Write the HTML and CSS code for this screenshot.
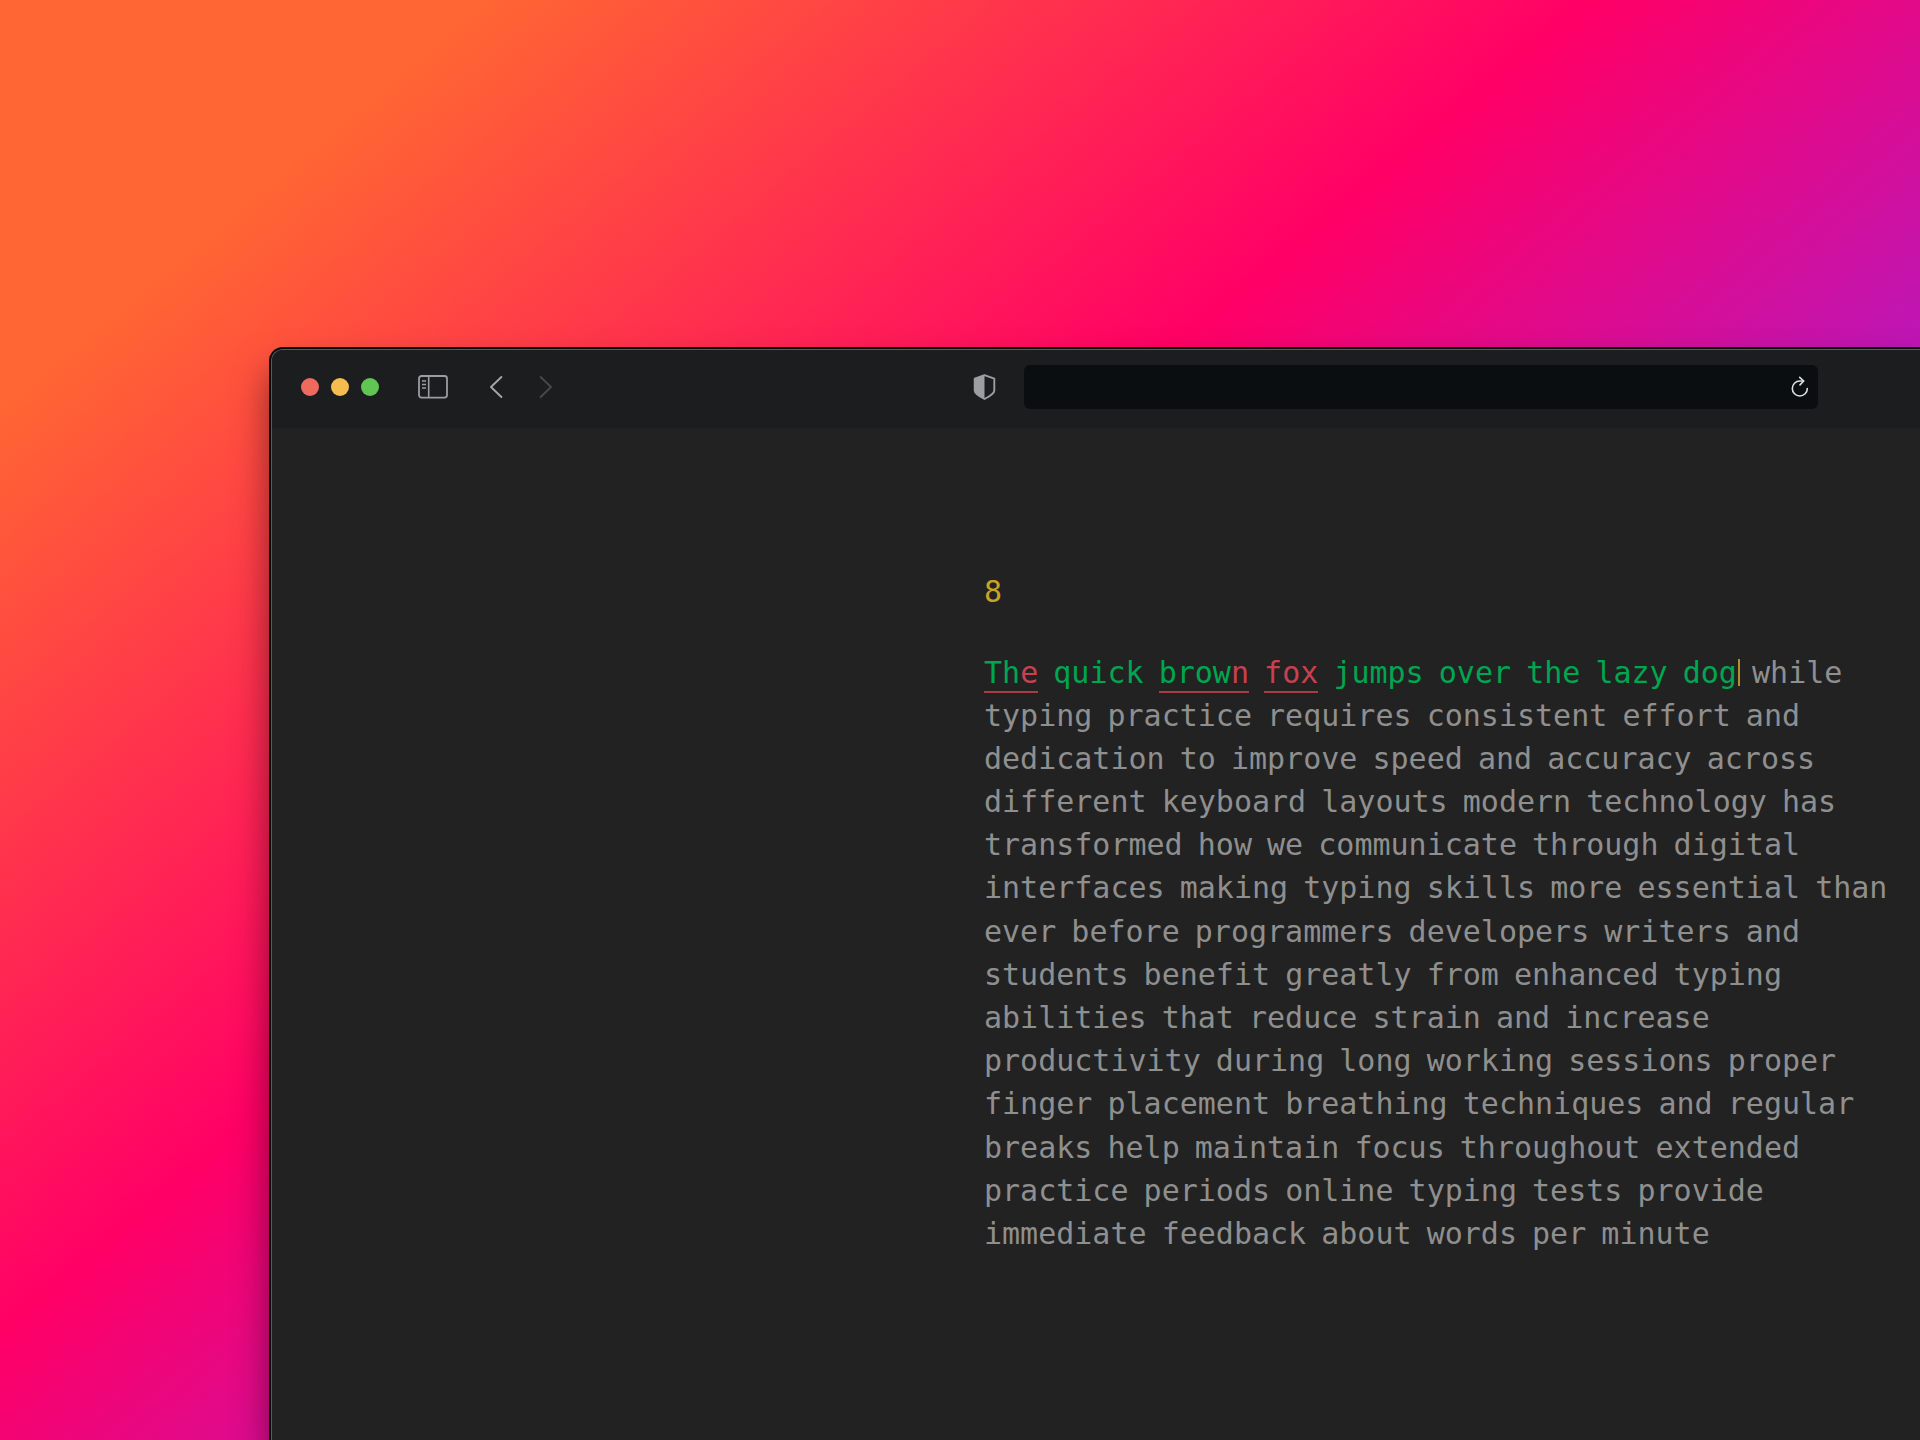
FILE: index.html
```html
<!DOCTYPE html>
<html lang="en">
<head>
<meta charset="utf-8">
<title>Typing practice</title>
<link rel="stylesheet" href="styles.css">
</head>
<body>
<main class="window">
  <header class="toolbar">
    <div class="lights"><i class="light red"></i><i class="light yellow"></i><i class="light green"></i></div>
    <svg class="sidebar-icon" width="30" height="24" viewBox="0 0 30 24" fill="none" stroke="#9b9da0">
      <rect x="1" y="1" width="28" height="21.6" rx="2.5" stroke-width="1.8"/>
      <path d="M10.7 1v21.6" stroke-width="1.6"/>
      <path d="M4 6h4M4 9.5h4M4 13h4" stroke-width="1.3"/>
    </svg>
    <svg class="back-icon" width="14" height="24" viewBox="0 0 14 24" fill="none" stroke="#a3a5a7" stroke-width="1.9" stroke-linecap="round" stroke-linejoin="round"><path d="M12.4 2L2 12l10.4 10"/></svg>
    <svg class="forward-icon" width="14" height="24" viewBox="0 0 14 24" fill="none" stroke="#46484a" stroke-width="1.9" stroke-linecap="round" stroke-linejoin="round"><path d="M1.6 2L12 12 1.6 22"/></svg>
    <svg class="shield-icon" width="23" height="26" viewBox="0 0 23 26">
      <path d="M11.500 1.200L21.300 4.700V16.500Q21.300 20 11.500 25Q1.700 20 1.700 16.500V4.700Z" fill="none" stroke="#9c9ea1" stroke-width="1.9" stroke-linejoin="round"/>
      <path d="M11.500 1.200V25Q1.700 20 1.700 16.500V4.700Z" fill="#9c9ea1"/>
    </svg>
    <div class="address">
      <svg class="reload-icon" width="18" height="22" viewBox="0 0 18 22" fill="none" stroke="#dcdedf" stroke-width="1.6" stroke-linecap="round" stroke-linejoin="round">
        <path d="M16.300 12.500A7.500 7.500 0 1 1 8.800 5H12.500"/>
        <path d="M8.700 1.300L12.700 5L9 8.900"/>
      </svg>
    </div>
  </header>
  <section class="page">
    <div class="count">8</div>
    <div class="words">
      <div class="line"><span class="word ok wrong">Th<b class="miss">e</b></span><span class="word ok">quick</span><span class="word ok wrong">brow<b class="miss">n</b></span><span class="word wrong"><b class="miss">fox</b></span><span class="word ok">jumps</span><span class="word ok">over</span><span class="word ok">the</span><span class="word ok">lazy</span><span class="word ok current">dog</span><span class="word">while</span></div>
      <div class="line"><span>typing</span><span>practice</span><span>requires</span><span>consistent</span><span>effort</span><span>and</span></div>
      <div class="line"><span>dedication</span><span>to</span><span>improve</span><span>speed</span><span>and</span><span>accuracy</span><span>across</span></div>
      <div class="line"><span>different</span><span>keyboard</span><span>layouts</span><span>modern</span><span>technology</span><span>has</span></div>
      <div class="line"><span>transformed</span><span>how</span><span>we</span><span>communicate</span><span>through</span><span>digital</span></div>
      <div class="line"><span>interfaces</span><span>making</span><span>typing</span><span>skills</span><span>more</span><span>essential</span><span>than</span></div>
      <div class="line"><span>ever</span><span>before</span><span>programmers</span><span>developers</span><span>writers</span><span>and</span></div>
      <div class="line"><span>students</span><span>benefit</span><span>greatly</span><span>from</span><span>enhanced</span><span>typing</span></div>
      <div class="line"><span>abilities</span><span>that</span><span>reduce</span><span>strain</span><span>and</span><span>increase</span></div>
      <div class="line"><span>productivity</span><span>during</span><span>long</span><span>working</span><span>sessions</span><span>proper</span></div>
      <div class="line"><span>finger</span><span>placement</span><span>breathing</span><span>techniques</span><span>and</span><span>regular</span></div>
      <div class="line"><span>breaks</span><span>help</span><span>maintain</span><span>focus</span><span>throughout</span><span>extended</span></div>
      <div class="line"><span>practice</span><span>periods</span><span>online</span><span>typing</span><span>tests</span><span>provide</span></div>
      <div class="line"><span>immediate</span><span>feedback</span><span>about</span><span>words</span><span>per</span><span>minute</span></div>
    </div>
  </section>
</main>
</body>
</html>
```
FILE: styles.css
```css
* { box-sizing: border-box; }
html { height: 100%; }
body {
  margin: 0;
  height: 1440px;
  overflow: hidden;
  padding: 349px 0 0 271px;
  background: linear-gradient(140deg, #ff6633 310px, #ff0066 1024px, #7f2bff 1940px);
}
.window {
  height: 100%;
  overflow: hidden;
  background: #222;
  border: solid #565b60;
  border-width: 1px 0 0 1px;
  border-radius: 12px 0 0 0;
  box-shadow: 0 0 0 2px #08090b, 0 22px 36px rgba(0, 0, 0, .5);
}
.toolbar {
  display: flex;
  align-items: center;
  height: 78px;
  padding: 0 0 5px 29px;
  background: #1b1d1f;
}
.lights { display: flex; gap: 12px; }
.light { width: 18px; height: 18px; border-radius: 50%; }
.red { background: #ee6a5f; }
.yellow { background: #f5bd4f; }
.green { background: #61c554; }
.sidebar-icon { margin-left: 39px; }
.back-icon { margin-left: 41px; }
.forward-icon { margin-left: 36px; }
.shield-icon { margin-left: 420px; }
.address {
  display: flex;
  align-items: center;
  justify-content: flex-end;
  width: 794px;
  height: 44px;
  margin-left: 28px;
  padding: 0 9px 0 0;
  border-radius: 6px;
  background: #0a0e11;
}
.page {
  padding: 141.5px 0 0 712px;
  font: 30px/43.2px "DejaVu Sans Mono", monospace;
  color: #8f8f8f;
}
.count { color: #c9a227; margin-bottom: 37.8px; }
.line { display: flex; gap: 15.1px; height: 43.2px; }
.ok { color: #00a650; }
.miss { font-weight: 400; color: #c8414f; }
.wrong { position: relative; }
.wrong::after {
  content: "";
  position: absolute;
  left: 0;
  right: 0;
  top: 40px;
  height: 2px;
  background: #a93b45;
}
.current { position: relative; }
.current::after {
  content: "";
  position: absolute;
  right: -3px;
  top: 8px;
  width: 2px;
  height: 27px;
  background: #b58f2a;
}
```
